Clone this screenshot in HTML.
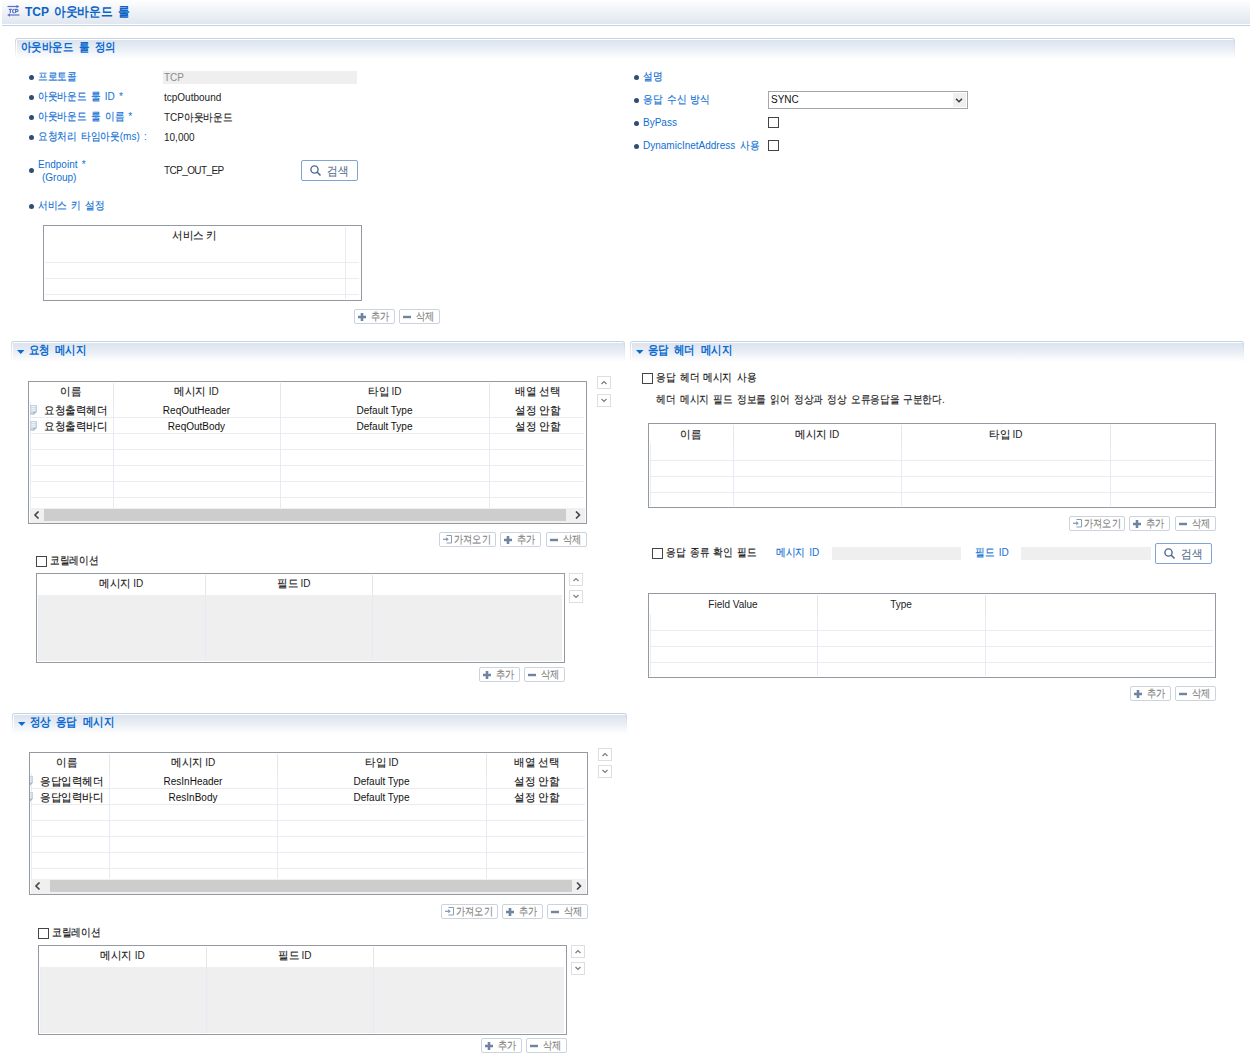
<!DOCTYPE html><html><head><meta charset="utf-8"><style>
*{margin:0;padding:0}
html,body{width:1250px;height:1059px;overflow:hidden;background:#fff;font-family:'Liberation Sans', sans-serif}
body>div,body>svg{position:absolute}
.t{position:absolute;white-space:nowrap;line-height:14px;word-spacing:1.5px}
:root{--r:1.1;--sc:.88}
.k{display:inline-block;font-size:calc(var(--r) * 1em);transform:scaleX(var(--sc));transform-origin:0 0;margin-right:calc(var(--n) * (var(--sc) - 1) * 1em);line-height:1;-webkit-text-stroke:0.15px currentColor}
.tbl{--r:1.05;--sc:.96;word-spacing:0}
.ttl{--r:1.12;--sc:.87;word-spacing:2.5px}
.ttl .k,.ttl0 .k{-webkit-text-stroke:0}
.ttl0{--r:1.12;--sc:.9;word-spacing:2px}
.sb{--r:1.18;--sc:.835}
.sh{position:absolute;border-radius:3px 3px 0 0;background:linear-gradient(#c3d1e1,#dfe6ef 40%,#fff)}
.sh1{position:absolute;left:1px;top:1px;right:1px;bottom:0;border-radius:2px 2px 0 0;background:#fff}
.sh2{position:absolute;left:1px;top:1px;right:0;bottom:0;background:linear-gradient(#dbe3ee,#e9eef5 45%,#fff)}
.tri{position:absolute;width:0;height:0;border-left:3.5px solid transparent;border-right:3.5px solid transparent;border-top:4px solid #0b6ad0}
.bul{position:absolute;width:5px;height:5px;border-radius:50%;background:#2e4e74}
.sb{position:absolute;height:15px;box-sizing:border-box;border:1px solid #cbd3de;border-radius:2px;background:#fff;font-size:9px;color:#858585;line-height:12px}
.ud{position:absolute;width:14px;height:13px;box-sizing:border-box;border:1px solid #dedede;background:#fff}
.tb{position:absolute;box-sizing:border-box;border:1px solid #959aa2;background:#fff;overflow:hidden}
</style></head><body>
<div style="left:2px;top:0px;width:1248px;height:24px;background:linear-gradient(#fdfefe,#e1e7f0)"></div>
<div style="left:2px;top:25px;width:1248px;height:1px;background:#c3d2e2"></div>
<svg width="13" height="12" style="left:7px;top:5px"><g fill="none" stroke="#5a72c6" stroke-width="1.2"><path d="M0.5 1.5h10"/><path d="M2 10h10.5"/><path d="M1.8 4.3h3M3.3 4.3v3.6"/><path d="M7.6 4.6Q5.6 4 5.6 6.1Q5.6 8.2 7.6 7.6"/><path d="M8.6 8v-3.7h1.1q1.3 0 1.3 1.1q0 1.1-1.3 1.1h-1.1"/></g><path d="M9.5 -0.2L12.3 1.5L9.5 3.2z" fill="#5a72c6"/><path d="M3 8.3L0.2 10L3 11.7z" fill="#5a72c6"/></svg>
<div class="t ttl0" style="left:25px;top:5px;font-size:12px;color:#0b64c6;font-weight:bold;line-height:15px">TCP <span class="k" style="--n:5">아웃바운드</span> <span class="k" style="--n:1">룰</span></div>
<div class="sh" style="left:15px;top:38px;width:1220px;height:21px"><div class="sh1"><div class="sh2"></div></div></div>
<div class="t ttl" style="left:21px;top:40px;font-size:11px;color:#0b6ad0;font-weight:bold;"><span class="k" style="--n:5">아웃바운드</span> <span class="k" style="--n:1">룰</span> <span class="k" style="--n:2">정의</span></div>
<div class="bul" style="left:28.5px;top:74.5px"></div>
<div class="bul" style="left:28.5px;top:94.5px"></div>
<div class="bul" style="left:28.5px;top:114.5px"></div>
<div class="bul" style="left:28.5px;top:134.5px"></div>
<div class="bul" style="left:28.5px;top:167.5px"></div>
<div class="bul" style="left:28.5px;top:203.5px"></div>
<div class="t " style="left:38px;top:70px;font-size:10px;color:#1070d4;font-weight:normal;"><span class="k" style="--n:4">프로토콜</span></div>
<div class="t " style="left:38px;top:90px;font-size:10px;color:#1070d4;font-weight:normal;"><span class="k" style="--n:5">아웃바운드</span> <span class="k" style="--n:1">룰</span> ID *</div>
<div class="t " style="left:38px;top:110px;font-size:10px;color:#1070d4;font-weight:normal;"><span class="k" style="--n:5">아웃바운드</span> <span class="k" style="--n:1">룰</span> <span class="k" style="--n:2">이름</span> *</div>
<div class="t " style="left:38px;top:130px;font-size:10px;color:#1070d4;font-weight:normal;"><span class="k" style="--n:4">요청처리</span> <span class="k" style="--n:4">타임아웃</span>(ms) :</div>
<div class="t " style="left:38px;top:158px;font-size:10px;color:#1070d4;font-weight:normal;">Endpoint *</div>
<div class="t " style="left:42px;top:171px;font-size:10px;color:#1070d4;font-weight:normal;">(Group)</div>
<div class="t " style="left:38px;top:199px;font-size:10px;color:#1070d4;font-weight:normal;"><span class="k" style="--n:3">서비스</span> <span class="k" style="--n:1">키</span> <span class="k" style="--n:2">설정</span></div>
<div style="left:163px;top:71px;width:194px;height:13px;background:#efefef"></div>
<div class="t " style="left:164px;top:71px;font-size:10px;color:#8c8c8c;font-weight:normal;">TCP</div>
<div class="t " style="left:164px;top:91px;font-size:10px;color:#222;font-weight:normal;">tcpOutbound</div>
<div class="t " style="left:164px;top:111px;font-size:10px;color:#222;font-weight:normal;">TCP<span class="k" style="--n:5">아웃바운드</span></div>
<div class="t " style="left:164px;top:131px;font-size:10px;color:#222;font-weight:normal;">10,000</div>
<div class="t " style="left:164px;top:164px;font-size:10px;color:#222;font-weight:normal;letter-spacing:-0.6px">TCP_OUT_EP</div>
<div style="left:301px;top:160px;width:57px;height:21px;box-sizing:border-box;border:1px solid #7ea5d6;border-radius:2px;background:#fff"><svg width="12" height="12" style="position:absolute;left:8px;top:4px"><circle cx="4.5" cy="4.5" r="3.6" fill="none" stroke="#4d6b8f" stroke-width="1.4"/><path d="M7 7l3.5 3.5" stroke="#4d6b8f" stroke-width="1.6"/></svg><span class="t" style="left:25px;top:3px;font-size:10.5px;color:#55708f"><span class="k" style="--n:2">검색</span></span></div>
<div class="bul" style="left:633.5px;top:74.5px"></div>
<div class="bul" style="left:633.5px;top:97.5px"></div>
<div class="bul" style="left:633.5px;top:120.5px"></div>
<div class="bul" style="left:633.5px;top:143.5px"></div>
<div class="t " style="left:643px;top:70px;font-size:10px;color:#1070d4;font-weight:normal;"><span class="k" style="--n:2">설명</span></div>
<div class="t " style="left:643px;top:93px;font-size:10px;color:#1070d4;font-weight:normal;"><span class="k" style="--n:2">응답</span> <span class="k" style="--n:2">수신</span> <span class="k" style="--n:2">방식</span></div>
<div class="t " style="left:643px;top:116px;font-size:10px;color:#1070d4;font-weight:normal;">ByPass</div>
<div class="t " style="left:643px;top:139px;font-size:10px;color:#1070d4;font-weight:normal;">DynamicInetAddress <span class="k" style="--n:2">사용</span></div>
<div style="left:768px;top:91px;width:200px;height:18px;box-sizing:border-box;border:1px solid #a3a6ad;background:#fff"><div style="position:absolute;left:184px;top:1px;width:13px;height:14px;background:#efefef"></div><svg width="10" height="8" style="position:absolute;left:186px;top:5px"><path d="M1 1.8L4 4.8L7 1.8" fill="none" stroke="#3a3a3a" stroke-width="1.5"/></svg><span class="t" style="left:2px;top:1px;font-size:10px;color:#111">SYNC</span></div>
<div style="left:768px;top:117px;width:11px;height:11px;border:1px solid #444;box-sizing:border-box;background:#fff"></div>
<div style="left:768px;top:140px;width:11px;height:11px;border:1px solid #444;box-sizing:border-box;background:#fff"></div>
<div class="tb" style="left:43px;top:225px;width:319px;height:76px">
<div style="position:absolute;left:301px;top:1px;width:1px;height:72px;background:#e8ecf2"></div>
<div style="position:absolute;left:1px;top:36px;width:314px;height:1px;background:#ececec"></div>
<div style="position:absolute;left:1px;top:52px;width:314px;height:1px;background:#ececec"></div>
<div style="position:absolute;left:1px;top:68px;width:314px;height:1px;background:#ececec"></div>
<div class="t tbl" style="left:0;width:301px;text-align:center;top:3px;font-size:10px;color:#222"><span class="k" style="--n:3">서비스</span> <span class="k" style="--n:1">키</span></div>
</div>
<div class="sb" style="left:354px;top:309px;width:41px"><svg width="8" height="8" style="position:absolute;left:3px;top:3px"><path d="M2.7 0h2.6v2.7h2.7v2.6h-2.7v2.7h-2.6v-2.7h-2.7v-2.6h2.7z" fill="#6e84a0"/></svg><span style="position:absolute;left:16px;top:1px;white-space:nowrap"><span class="k" style="--n:2">추가</span></span></div>
<div class="sb" style="left:399px;top:309px;width:41px"><svg width="8" height="8" style="position:absolute;left:3px;top:3px"><rect x="0" y="2.8" width="8" height="2.4" fill="#6e84a0"/></svg><span style="position:absolute;left:16px;top:1px;white-space:nowrap"><span class="k" style="--n:2">삭제</span></span></div>
<div class="sh" style="left:11px;top:341px;width:614px;height:21px"><div class="sh1"><div class="sh2"></div></div></div>
<svg width="8" height="5" style="left:17px;top:350px"><path d="M0 0h7.5l-3.75 4z" fill="#0b6ad0"/></svg>
<div class="t ttl" style="left:29px;top:343px;font-size:11px;color:#0b6ad0;font-weight:bold;"><span class="k" style="--n:2">요청</span> <span class="k" style="--n:3">메시지</span></div>
<div class="tb" style="left:28px;top:381px;width:559px;height:143px">
<div style="position:absolute;left:1px;top:35px;width:554px;height:1px;background:#ececec"></div>
<div style="position:absolute;left:1px;top:51px;width:554px;height:1px;background:#ececec"></div>
<div style="position:absolute;left:1px;top:67px;width:554px;height:1px;background:#ececec"></div>
<div style="position:absolute;left:1px;top:83px;width:554px;height:1px;background:#ececec"></div>
<div style="position:absolute;left:1px;top:99px;width:554px;height:1px;background:#ececec"></div>
<div style="position:absolute;left:1px;top:115px;width:554px;height:1px;background:#ececec"></div>
<div style="position:absolute;left:84px;top:1px;width:1px;height:19px;background:#e6e6e6"></div>
<div style="position:absolute;left:84px;top:20px;width:1px;height:107px;background:#e4ebf4"></div>
<div style="position:absolute;left:251px;top:1px;width:1px;height:19px;background:#e6e6e6"></div>
<div style="position:absolute;left:251px;top:20px;width:1px;height:107px;background:#e4ebf4"></div>
<div style="position:absolute;left:460px;top:1px;width:1px;height:19px;background:#e6e6e6"></div>
<div style="position:absolute;left:460px;top:20px;width:1px;height:107px;background:#e4ebf4"></div>
<div style="position:absolute;left:1px;top:20px;width:1px;height:107px;background:#e8eef6"></div>
<div class="t tbl" style="left:0px;width:84px;text-align:center;top:3px;font-size:10px;color:#222"><span class="k" style="--n:2">이름</span></div>
<div class="t tbl" style="left:84px;width:167px;text-align:center;top:3px;font-size:10px;color:#222"><span class="k" style="--n:3">메시지</span> ID</div>
<div class="t tbl" style="left:251px;width:209px;text-align:center;top:3px;font-size:10px;color:#222"><span class="k" style="--n:2">타입</span> ID</div>
<div class="t tbl" style="left:460px;width:97px;text-align:center;top:3px;font-size:10px;color:#222"><span class="k" style="--n:2">배열</span> <span class="k" style="--n:2">선택</span></div>
<svg width="8" height="10" style="position:absolute;left:1px;top:23px"><path d="M0 0h7v6.5l-3.5 3.5h-3.5z" fill="#c6d3e2"/><path d="M1.3 1.8h4.2M1.3 3.8h4.2M1.3 5.8h4.2" stroke="#fff" stroke-width="1"/><path d="M7 6.5l-3.5 3.5v-3.5z" fill="#a9b9cc"/></svg>
<div class="t tbl" style="left:0px;width:84px;text-align:center;padding-left:10px;box-sizing:border-box;top:22px;font-size:10px;color:#111"><span class="k" style="--n:6">요청출력헤더</span></div>
<div class="t tbl" style="left:84px;width:167px;text-align:center;top:22px;font-size:10px;color:#111">ReqOutHeader</div>
<div class="t tbl" style="left:251px;width:209px;text-align:center;top:22px;font-size:10px;color:#111">Default Type</div>
<div class="t tbl" style="left:460px;width:97px;text-align:center;top:22px;font-size:10px;color:#111"><span class="k" style="--n:2">설정</span> <span class="k" style="--n:2">안함</span></div>
<svg width="8" height="10" style="position:absolute;left:1px;top:39px"><path d="M0 0h7v6.5l-3.5 3.5h-3.5z" fill="#c6d3e2"/><path d="M1.3 1.8h4.2M1.3 3.8h4.2M1.3 5.8h4.2" stroke="#fff" stroke-width="1"/><path d="M7 6.5l-3.5 3.5v-3.5z" fill="#a9b9cc"/></svg>
<div class="t tbl" style="left:0px;width:84px;text-align:center;padding-left:10px;box-sizing:border-box;top:38px;font-size:10px;color:#111"><span class="k" style="--n:6">요청출력바디</span></div>
<div class="t tbl" style="left:84px;width:167px;text-align:center;top:38px;font-size:10px;color:#111">ReqOutBody</div>
<div class="t tbl" style="left:251px;width:209px;text-align:center;top:38px;font-size:10px;color:#111">Default Type</div>
<div class="t tbl" style="left:460px;width:97px;text-align:center;top:38px;font-size:10px;color:#111"><span class="k" style="--n:2">설정</span> <span class="k" style="--n:2">안함</span></div>
<div style="position:absolute;left:1px;top:126px;width:555px;height:15px;background:#f0f0f0"></div>
<div style="position:absolute;left:15px;top:127px;width:522px;height:12px;background:#cdcdcd"></div>
<svg width="8" height="8" style="position:absolute;left:4px;top:129px"><path d="M5.5 0.5l-3.5 3.5l3.5 3.5" fill="none" stroke="#444" stroke-width="1.6"/></svg>
<svg width="8" height="8" style="position:absolute;left:545px;top:129px"><path d="M2 0.5l3.5 3.5l-3.5 3.5" fill="none" stroke="#444" stroke-width="1.6"/></svg>
</div>
<div class="ud" style="left:597px;top:376px"><svg width="11" height="11" style="position:absolute;left:1px;top:1px"><path d="M2.5 6L5 3.5L7.5 6" fill="none" stroke="#7c7c7c" stroke-width="1.2"/></svg></div>
<div class="ud" style="left:597px;top:394px"><svg width="11" height="11" style="position:absolute;left:1px;top:1px"><path d="M2.5 3L5 5.5L7.5 3" fill="none" stroke="#7c7c7c" stroke-width="1.2"/></svg></div>
<div class="sb" style="left:439px;top:532px;width:57px"><svg width="10" height="9" style="position:absolute;left:3px;top:2px"><path d="M3.5 0.5h5v7.5h-5" fill="none" stroke="#8a9cb3" stroke-width="1"/><path d="M0 4.3h4.5" stroke="#8a9cb3" stroke-width="1.3"/><path d="M3.2 2l2.6 2.3l-2.6 2.3z" fill="#8a9cb3"/></svg><span style="position:absolute;left:14px;top:1px;white-space:nowrap"><span class="k" style="--n:4">가져오기</span></span></div>
<div class="sb" style="left:500px;top:532px;width:41px"><svg width="8" height="8" style="position:absolute;left:3px;top:3px"><path d="M2.7 0h2.6v2.7h2.7v2.6h-2.7v2.7h-2.6v-2.7h-2.7v-2.6h2.7z" fill="#6e84a0"/></svg><span style="position:absolute;left:16px;top:1px;white-space:nowrap"><span class="k" style="--n:2">추가</span></span></div>
<div class="sb" style="left:546px;top:532px;width:41px"><svg width="8" height="8" style="position:absolute;left:3px;top:3px"><rect x="0" y="2.8" width="8" height="2.4" fill="#6e84a0"/></svg><span style="position:absolute;left:16px;top:1px;white-space:nowrap"><span class="k" style="--n:2">삭제</span></span></div>
<div style="left:36px;top:556px;width:11px;height:11px;border:1px solid #444;box-sizing:border-box;background:#fff"></div>
<div class="t " style="left:50px;top:554px;font-size:10px;color:#111;font-weight:normal;"><span class="k" style="--n:5">코릴레이션</span></div>
<div class="tb" style="left:36px;top:573px;width:529px;height:90px">
<div style="position:absolute;left:1px;top:21px;width:524px;height:66px;background:#efefef"></div>
<div style="position:absolute;left:168px;top:1px;width:1px;height:20px;background:#e6e6e6"></div>
<div style="position:absolute;left:168px;top:21px;width:1px;height:66px;background:#e4ebf4"></div>
<div style="position:absolute;left:335px;top:1px;width:1px;height:20px;background:#e6e6e6"></div>
<div style="position:absolute;left:335px;top:21px;width:1px;height:66px;background:#e4ebf4"></div>
<div style="position:absolute;left:1px;top:21px;width:1px;height:66px;background:#e8eef6"></div>
<div class="t tbl" style="left:0px;width:168px;text-align:center;top:3px;font-size:10px;color:#222"><span class="k" style="--n:3">메시지</span> ID</div>
<div class="t tbl" style="left:173px;width:167px;text-align:center;top:3px;font-size:10px;color:#222"><span class="k" style="--n:2">필드</span> ID</div>
</div>
<div class="ud" style="left:569px;top:573px"><svg width="11" height="11" style="position:absolute;left:1px;top:1px"><path d="M2.5 6L5 3.5L7.5 6" fill="none" stroke="#7c7c7c" stroke-width="1.2"/></svg></div>
<div class="ud" style="left:569px;top:590px"><svg width="11" height="11" style="position:absolute;left:1px;top:1px"><path d="M2.5 3L5 5.5L7.5 3" fill="none" stroke="#7c7c7c" stroke-width="1.2"/></svg></div>
<div class="sb" style="left:479px;top:667px;width:41px"><svg width="8" height="8" style="position:absolute;left:3px;top:3px"><path d="M2.7 0h2.6v2.7h2.7v2.6h-2.7v2.7h-2.6v-2.7h-2.7v-2.6h2.7z" fill="#6e84a0"/></svg><span style="position:absolute;left:16px;top:1px;white-space:nowrap"><span class="k" style="--n:2">추가</span></span></div>
<div class="sb" style="left:524px;top:667px;width:41px"><svg width="8" height="8" style="position:absolute;left:3px;top:3px"><rect x="0" y="2.8" width="8" height="2.4" fill="#6e84a0"/></svg><span style="position:absolute;left:16px;top:1px;white-space:nowrap"><span class="k" style="--n:2">삭제</span></span></div>
<div class="sh" style="left:630px;top:341px;width:614px;height:21px"><div class="sh1"><div class="sh2"></div></div></div>
<svg width="8" height="5" style="left:636px;top:350px"><path d="M0 0h7.5l-3.75 4z" fill="#0b6ad0"/></svg>
<div class="t ttl" style="left:648px;top:343px;font-size:11px;color:#0b6ad0;font-weight:bold;"><span class="k" style="--n:2">응답</span> <span class="k" style="--n:2">헤더</span> <span class="k" style="--n:3">메시지</span></div>
<div style="left:642px;top:373px;width:11px;height:11px;border:1px solid #444;box-sizing:border-box;background:#fff"></div>
<div class="t " style="left:656px;top:371px;font-size:10px;color:#111;font-weight:normal;"><span class="k" style="--n:2">응답</span> <span class="k" style="--n:2">헤더</span> <span class="k" style="--n:3">메시지</span> <span class="k" style="--n:2">사용</span></div>
<div class="t " style="left:656px;top:393px;font-size:10px;color:#222;font-weight:normal;"><span class="k" style="--n:2">헤더</span> <span class="k" style="--n:3">메시지</span> <span class="k" style="--n:2">필드</span> <span class="k" style="--n:3">정보를</span> <span class="k" style="--n:2">읽어</span> <span class="k" style="--n:3">정상과</span> <span class="k" style="--n:2">정상</span> <span class="k" style="--n:5">오류응답을</span> <span class="k" style="--n:4">구분한다</span>.</div>
<div class="tb" style="left:648px;top:423px;width:568px;height:85px">
<div style="position:absolute;left:1px;top:36px;width:563px;height:1px;background:#ececec"></div>
<div style="position:absolute;left:1px;top:52px;width:563px;height:1px;background:#ececec"></div>
<div style="position:absolute;left:1px;top:68px;width:563px;height:1px;background:#ececec"></div>
<div style="position:absolute;left:84px;top:1px;width:1px;height:19px;background:#e6e6e6"></div>
<div style="position:absolute;left:84px;top:20px;width:1px;height:62px;background:#e4ebf4"></div>
<div style="position:absolute;left:252px;top:1px;width:1px;height:19px;background:#e6e6e6"></div>
<div style="position:absolute;left:252px;top:20px;width:1px;height:62px;background:#e4ebf4"></div>
<div style="position:absolute;left:461px;top:1px;width:1px;height:19px;background:#e6e6e6"></div>
<div style="position:absolute;left:461px;top:20px;width:1px;height:62px;background:#e4ebf4"></div>
<div style="position:absolute;left:1px;top:20px;width:1px;height:62px;background:#e8eef6"></div>
<div class="t tbl" style="left:0px;width:84px;text-align:center;top:4px;font-size:10px;color:#222"><span class="k" style="--n:2">이름</span></div>
<div class="t tbl" style="left:84px;width:168px;text-align:center;top:4px;font-size:10px;color:#222"><span class="k" style="--n:3">메시지</span> ID</div>
<div class="t tbl" style="left:252px;width:209px;text-align:center;top:4px;font-size:10px;color:#222"><span class="k" style="--n:2">타입</span> ID</div>
</div>
<div class="sb" style="left:1069px;top:516px;width:56px"><svg width="10" height="9" style="position:absolute;left:3px;top:2px"><path d="M3.5 0.5h5v7.5h-5" fill="none" stroke="#8a9cb3" stroke-width="1"/><path d="M0 4.3h4.5" stroke="#8a9cb3" stroke-width="1.3"/><path d="M3.2 2l2.6 2.3l-2.6 2.3z" fill="#8a9cb3"/></svg><span style="position:absolute;left:14px;top:1px;white-space:nowrap"><span class="k" style="--n:4">가져오기</span></span></div>
<div class="sb" style="left:1129px;top:516px;width:41px"><svg width="8" height="8" style="position:absolute;left:3px;top:3px"><path d="M2.7 0h2.6v2.7h2.7v2.6h-2.7v2.7h-2.6v-2.7h-2.7v-2.6h2.7z" fill="#6e84a0"/></svg><span style="position:absolute;left:16px;top:1px;white-space:nowrap"><span class="k" style="--n:2">추가</span></span></div>
<div class="sb" style="left:1175px;top:516px;width:41px"><svg width="8" height="8" style="position:absolute;left:3px;top:3px"><rect x="0" y="2.8" width="8" height="2.4" fill="#6e84a0"/></svg><span style="position:absolute;left:16px;top:1px;white-space:nowrap"><span class="k" style="--n:2">삭제</span></span></div>
<div style="left:652px;top:548px;width:11px;height:11px;border:1px solid #444;box-sizing:border-box;background:#fff"></div>
<div class="t " style="left:666px;top:546px;font-size:10px;color:#111;font-weight:normal;"><span class="k" style="--n:2">응답</span> <span class="k" style="--n:2">종류</span> <span class="k" style="--n:2">확인</span> <span class="k" style="--n:2">필드</span></div>
<div class="t " style="left:776px;top:546px;font-size:10px;color:#1070d4;font-weight:normal;"><span class="k" style="--n:3">메시지</span> ID</div>
<div style="left:832px;top:547px;width:129px;height:13px;background:#efefef"></div>
<div class="t " style="left:975px;top:546px;font-size:10px;color:#1070d4;font-weight:normal;"><span class="k" style="--n:2">필드</span> ID</div>
<div style="left:1021px;top:547px;width:130px;height:13px;background:#efefef"></div>
<div style="left:1155px;top:543px;width:57px;height:21px;box-sizing:border-box;border:1px solid #7ea5d6;border-radius:2px;background:#fff"><svg width="12" height="12" style="position:absolute;left:8px;top:4px"><circle cx="4.5" cy="4.5" r="3.6" fill="none" stroke="#4d6b8f" stroke-width="1.4"/><path d="M7 7l3.5 3.5" stroke="#4d6b8f" stroke-width="1.6"/></svg><span class="t" style="left:25px;top:3px;font-size:10.5px;color:#55708f"><span class="k" style="--n:2">검색</span></span></div>
<div class="tb" style="left:648px;top:593px;width:568px;height:85px">
<div style="position:absolute;left:1px;top:36px;width:563px;height:1px;background:#ececec"></div>
<div style="position:absolute;left:1px;top:52px;width:563px;height:1px;background:#ececec"></div>
<div style="position:absolute;left:1px;top:68px;width:563px;height:1px;background:#ececec"></div>
<div style="position:absolute;left:168px;top:1px;width:1px;height:19px;background:#e6e6e6"></div>
<div style="position:absolute;left:168px;top:20px;width:1px;height:62px;background:#e4ebf4"></div>
<div style="position:absolute;left:336px;top:1px;width:1px;height:19px;background:#e6e6e6"></div>
<div style="position:absolute;left:336px;top:20px;width:1px;height:62px;background:#e4ebf4"></div>
<div style="position:absolute;left:1px;top:20px;width:1px;height:62px;background:#e8eef6"></div>
<div class="t tbl" style="left:0px;width:168px;text-align:center;top:4px;font-size:10px;color:#222">Field Value</div>
<div class="t tbl" style="left:168px;width:168px;text-align:center;top:4px;font-size:10px;color:#222">Type</div>
</div>
<div class="sb" style="left:1130px;top:686px;width:41px"><svg width="8" height="8" style="position:absolute;left:3px;top:3px"><path d="M2.7 0h2.6v2.7h2.7v2.6h-2.7v2.7h-2.6v-2.7h-2.7v-2.6h2.7z" fill="#6e84a0"/></svg><span style="position:absolute;left:16px;top:1px;white-space:nowrap"><span class="k" style="--n:2">추가</span></span></div>
<div class="sb" style="left:1175px;top:686px;width:41px"><svg width="8" height="8" style="position:absolute;left:3px;top:3px"><rect x="0" y="2.8" width="8" height="2.4" fill="#6e84a0"/></svg><span style="position:absolute;left:16px;top:1px;white-space:nowrap"><span class="k" style="--n:2">삭제</span></span></div>
<div class="sh" style="left:12px;top:713px;width:615px;height:21px"><div class="sh1"><div class="sh2"></div></div></div>
<svg width="8" height="5" style="left:18px;top:722px"><path d="M0 0h7.5l-3.75 4z" fill="#0b6ad0"/></svg>
<div class="t ttl" style="left:30px;top:715px;font-size:11px;color:#0b6ad0;font-weight:bold;"><span class="k" style="--n:2">정상</span> <span class="k" style="--n:2">응답</span> <span class="k" style="--n:3">메시지</span></div>
<div class="tb" style="left:29px;top:752px;width:559px;height:143px">
<div style="position:absolute;left:1px;top:35px;width:554px;height:1px;background:#ececec"></div>
<div style="position:absolute;left:1px;top:51px;width:554px;height:1px;background:#ececec"></div>
<div style="position:absolute;left:1px;top:67px;width:554px;height:1px;background:#ececec"></div>
<div style="position:absolute;left:1px;top:83px;width:554px;height:1px;background:#ececec"></div>
<div style="position:absolute;left:1px;top:99px;width:554px;height:1px;background:#ececec"></div>
<div style="position:absolute;left:1px;top:115px;width:554px;height:1px;background:#ececec"></div>
<div style="position:absolute;left:79px;top:1px;width:1px;height:19px;background:#e6e6e6"></div>
<div style="position:absolute;left:79px;top:20px;width:1px;height:107px;background:#e4ebf4"></div>
<div style="position:absolute;left:247px;top:1px;width:1px;height:19px;background:#e6e6e6"></div>
<div style="position:absolute;left:247px;top:20px;width:1px;height:107px;background:#e4ebf4"></div>
<div style="position:absolute;left:456px;top:1px;width:1px;height:19px;background:#e6e6e6"></div>
<div style="position:absolute;left:456px;top:20px;width:1px;height:107px;background:#e4ebf4"></div>
<div style="position:absolute;left:1px;top:20px;width:1px;height:107px;background:#e8eef6"></div>
<div class="t tbl" style="left:-5px;width:84px;text-align:center;top:3px;font-size:10px;color:#222"><span class="k" style="--n:2">이름</span></div>
<div class="t tbl" style="left:79px;width:168px;text-align:center;top:3px;font-size:10px;color:#222"><span class="k" style="--n:3">메시지</span> ID</div>
<div class="t tbl" style="left:247px;width:209px;text-align:center;top:3px;font-size:10px;color:#222"><span class="k" style="--n:2">타입</span> ID</div>
<div class="t tbl" style="left:456px;width:101px;text-align:center;top:3px;font-size:10px;color:#222"><span class="k" style="--n:2">배열</span> <span class="k" style="--n:2">선택</span></div>
<svg width="8" height="10" style="position:absolute;left:-4px;top:23px"><path d="M0 0h7v6.5l-3.5 3.5h-3.5z" fill="#c6d3e2"/><path d="M1.3 1.8h4.2M1.3 3.8h4.2M1.3 5.8h4.2" stroke="#fff" stroke-width="1"/><path d="M7 6.5l-3.5 3.5v-3.5z" fill="#a9b9cc"/></svg>
<div class="t tbl" style="left:-5px;width:84px;text-align:center;padding-left:10px;box-sizing:border-box;top:22px;font-size:10px;color:#111"><span class="k" style="--n:6">응답입력헤더</span></div>
<div class="t tbl" style="left:79px;width:168px;text-align:center;top:22px;font-size:10px;color:#111">ResInHeader</div>
<div class="t tbl" style="left:247px;width:209px;text-align:center;top:22px;font-size:10px;color:#111">Default Type</div>
<div class="t tbl" style="left:456px;width:101px;text-align:center;top:22px;font-size:10px;color:#111"><span class="k" style="--n:2">설정</span> <span class="k" style="--n:2">안함</span></div>
<svg width="8" height="10" style="position:absolute;left:-4px;top:39px"><path d="M0 0h7v6.5l-3.5 3.5h-3.5z" fill="#c6d3e2"/><path d="M1.3 1.8h4.2M1.3 3.8h4.2M1.3 5.8h4.2" stroke="#fff" stroke-width="1"/><path d="M7 6.5l-3.5 3.5v-3.5z" fill="#a9b9cc"/></svg>
<div class="t tbl" style="left:-5px;width:84px;text-align:center;padding-left:10px;box-sizing:border-box;top:38px;font-size:10px;color:#111"><span class="k" style="--n:6">응답입력바디</span></div>
<div class="t tbl" style="left:79px;width:168px;text-align:center;top:38px;font-size:10px;color:#111">ResInBody</div>
<div class="t tbl" style="left:247px;width:209px;text-align:center;top:38px;font-size:10px;color:#111">Default Type</div>
<div class="t tbl" style="left:456px;width:101px;text-align:center;top:38px;font-size:10px;color:#111"><span class="k" style="--n:2">설정</span> <span class="k" style="--n:2">안함</span></div>
<div style="position:absolute;left:1px;top:126px;width:555px;height:15px;background:#f0f0f0"></div>
<div style="position:absolute;left:20px;top:127px;width:522px;height:12px;background:#cdcdcd"></div>
<svg width="8" height="8" style="position:absolute;left:4px;top:129px"><path d="M5.5 0.5l-3.5 3.5l3.5 3.5" fill="none" stroke="#444" stroke-width="1.6"/></svg>
<svg width="8" height="8" style="position:absolute;left:545px;top:129px"><path d="M2 0.5l3.5 3.5l-3.5 3.5" fill="none" stroke="#444" stroke-width="1.6"/></svg>
</div>
<div class="ud" style="left:598px;top:748px"><svg width="11" height="11" style="position:absolute;left:1px;top:1px"><path d="M2.5 6L5 3.5L7.5 6" fill="none" stroke="#7c7c7c" stroke-width="1.2"/></svg></div>
<div class="ud" style="left:598px;top:765px"><svg width="11" height="11" style="position:absolute;left:1px;top:1px"><path d="M2.5 3L5 5.5L7.5 3" fill="none" stroke="#7c7c7c" stroke-width="1.2"/></svg></div>
<div class="sb" style="left:441px;top:904px;width:57px"><svg width="10" height="9" style="position:absolute;left:3px;top:2px"><path d="M3.5 0.5h5v7.5h-5" fill="none" stroke="#8a9cb3" stroke-width="1"/><path d="M0 4.3h4.5" stroke="#8a9cb3" stroke-width="1.3"/><path d="M3.2 2l2.6 2.3l-2.6 2.3z" fill="#8a9cb3"/></svg><span style="position:absolute;left:14px;top:1px;white-space:nowrap"><span class="k" style="--n:4">가져오기</span></span></div>
<div class="sb" style="left:502px;top:904px;width:41px"><svg width="8" height="8" style="position:absolute;left:3px;top:3px"><path d="M2.7 0h2.6v2.7h2.7v2.6h-2.7v2.7h-2.6v-2.7h-2.7v-2.6h2.7z" fill="#6e84a0"/></svg><span style="position:absolute;left:16px;top:1px;white-space:nowrap"><span class="k" style="--n:2">추가</span></span></div>
<div class="sb" style="left:547px;top:904px;width:41px"><svg width="8" height="8" style="position:absolute;left:3px;top:3px"><rect x="0" y="2.8" width="8" height="2.4" fill="#6e84a0"/></svg><span style="position:absolute;left:16px;top:1px;white-space:nowrap"><span class="k" style="--n:2">삭제</span></span></div>
<div style="left:38px;top:928px;width:11px;height:11px;border:1px solid #444;box-sizing:border-box;background:#fff"></div>
<div class="t " style="left:52px;top:926px;font-size:10px;color:#111;font-weight:normal;"><span class="k" style="--n:5">코릴레이션</span></div>
<div class="tb" style="left:38px;top:945px;width:529px;height:90px">
<div style="position:absolute;left:1px;top:21px;width:524px;height:66px;background:#efefef"></div>
<div style="position:absolute;left:167px;top:1px;width:1px;height:20px;background:#e6e6e6"></div>
<div style="position:absolute;left:167px;top:21px;width:1px;height:66px;background:#e4ebf4"></div>
<div style="position:absolute;left:334px;top:1px;width:1px;height:20px;background:#e6e6e6"></div>
<div style="position:absolute;left:334px;top:21px;width:1px;height:66px;background:#e4ebf4"></div>
<div style="position:absolute;left:1px;top:21px;width:1px;height:66px;background:#e8eef6"></div>
<div class="t tbl" style="left:0px;width:167px;text-align:center;top:3px;font-size:10px;color:#222"><span class="k" style="--n:3">메시지</span> ID</div>
<div class="t tbl" style="left:172px;width:167px;text-align:center;top:3px;font-size:10px;color:#222"><span class="k" style="--n:2">필드</span> ID</div>
</div>
<div class="ud" style="left:571px;top:945px"><svg width="11" height="11" style="position:absolute;left:1px;top:1px"><path d="M2.5 6L5 3.5L7.5 6" fill="none" stroke="#7c7c7c" stroke-width="1.2"/></svg></div>
<div class="ud" style="left:571px;top:962px"><svg width="11" height="11" style="position:absolute;left:1px;top:1px"><path d="M2.5 3L5 5.5L7.5 3" fill="none" stroke="#7c7c7c" stroke-width="1.2"/></svg></div>
<div class="sb" style="left:481px;top:1038px;width:41px"><svg width="8" height="8" style="position:absolute;left:3px;top:3px"><path d="M2.7 0h2.6v2.7h2.7v2.6h-2.7v2.7h-2.6v-2.7h-2.7v-2.6h2.7z" fill="#6e84a0"/></svg><span style="position:absolute;left:16px;top:1px;white-space:nowrap"><span class="k" style="--n:2">추가</span></span></div>
<div class="sb" style="left:526px;top:1038px;width:41px"><svg width="8" height="8" style="position:absolute;left:3px;top:3px"><rect x="0" y="2.8" width="8" height="2.4" fill="#6e84a0"/></svg><span style="position:absolute;left:16px;top:1px;white-space:nowrap"><span class="k" style="--n:2">삭제</span></span></div>
</body></html>
